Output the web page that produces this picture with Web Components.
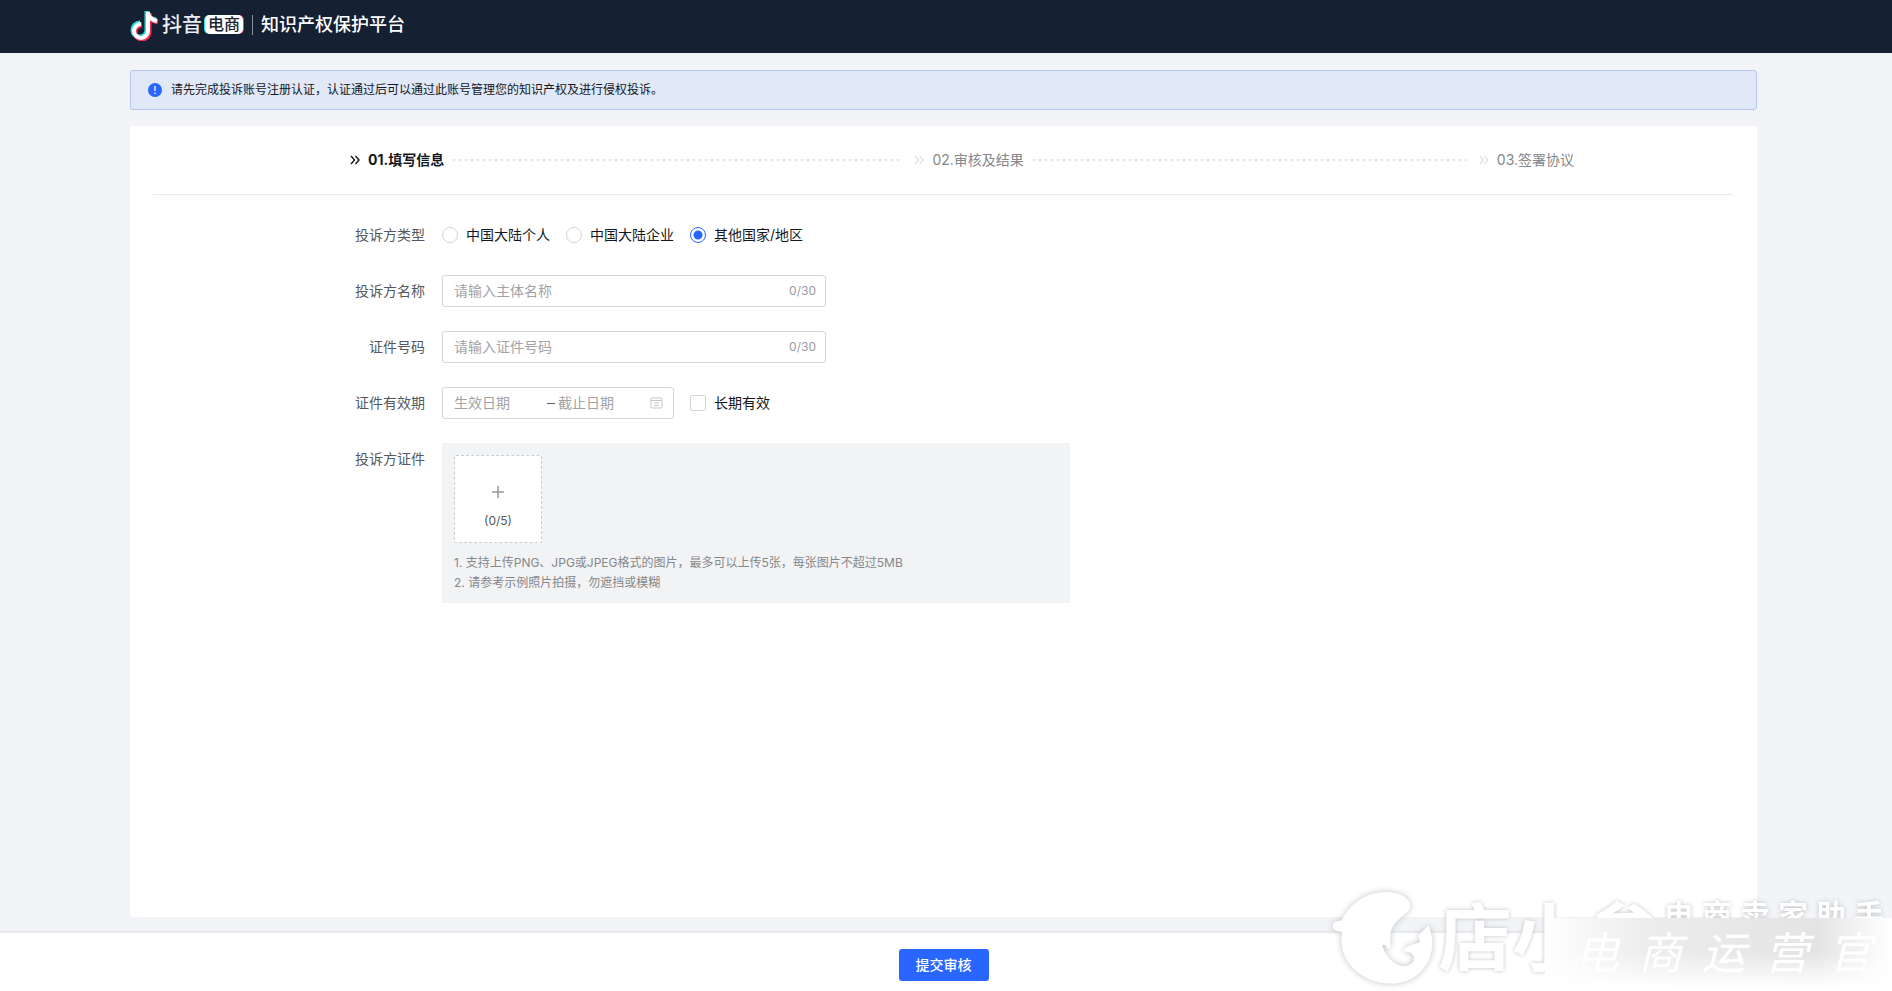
<!DOCTYPE html>
<html lang="zh-CN">
<head>
<meta charset="utf-8">
<title>知识产权保护平台</title>
<style>
  html, body { margin: 0; }
  body {
    background: #f2f4f7; color: #15171c;
    font: 14px/20px Inter, "Noto Sans CJK SC", sans-serif;
    --blue: #2966ff; --line: #d3d4d8; --muted: #85878a; --hint: #a1a3a6;
  }
</style>
</head>
<body>
<ip-page>
  <ip-header slot="header">知识产权保护平台</ip-header>
  <ip-notice slot="notice">请先完成投诉账号注册认证，认证通过后可以通过此账号管理您的知识产权及进行侵权投诉。</ip-notice>
  <ip-steps>
    <ip-step current>01.填写信息</ip-step>
    <ip-step>02.审核及结果</ip-step>
    <ip-step last>03.签署协议</ip-step>
  </ip-steps>
  <ip-form>
    <ip-type-field></ip-type-field>
    <ip-text-field label="投诉方名称" hint="请输入主体名称"></ip-text-field>
    <ip-text-field label="证件号码" hint="请输入证件号码"></ip-text-field>
    <ip-date-field></ip-date-field>
    <ip-upload-field></ip-upload-field>
  </ip-form>
  <ip-footer slot="footer">提交审核</ip-footer>
</ip-page>
<ip-watermark></ip-watermark>

<script>
const define = (name, html) => customElements.define(name, class extends HTMLElement {
  constructor() {
    super();
    const t = document.createElement('template');
    t.innerHTML = html;
    this.attachShadow({ mode: 'open' }).append(t.content.cloneNode(true));
  }
  connectedCallback() {
    const root = this.shadowRoot;
    const label = root.querySelector('[data-label]');
    if (label && this.hasAttribute('label')) label.textContent = this.getAttribute('label');
    const input = root.querySelector('[data-hint]');
    if (input && this.hasAttribute('hint')) input.placeholder = this.getAttribute('hint');
  }
});

const fieldCss = `
  *{box-sizing:border-box}
  :host{display:block}
  .row{display:flex;align-items:flex-start;margin:0;padding:0;border:0;min-width:0}
  .name{flex:none;width:73px;margin-right:17px;text-align:right;line-height:32px;color:#55585c}
  input,button{font:inherit;color:inherit}
  input::placeholder{color:var(--hint);opacity:1}
  .box{display:flex;align-items:center;height:32px;padding:0 9px 0 11px;border:1px solid var(--line);border-radius:3px;background:#fff}
  .box input{flex:1;min-width:0;padding:0 0 2px;border:0;outline:0;background:none;height:30px}
  .opt{display:flex;align-items:center;gap:8px;height:32px}
`;

define('ip-page', `<style>
  *{box-sizing:border-box}
  :host{display:flex;flex-direction:column;min-height:100vh}
  .main{flex:1;display:flex;flex-direction:column;gap:16px;padding:17px 135px 16px 130px}
  main{flex:1;background:#fff;border-radius:2px;padding:0 24px 24px 23px}
</style>
<slot name="header"></slot>
<div class="main"><slot name="notice"></slot><main><slot></slot></main></div>
<slot name="footer"></slot>`);

define('ip-header', `<style>
  :host{display:block;background:#152033;color:#fff}
  header{display:flex;align-items:center;height:53px;padding:0 130px 4px;box-sizing:border-box}
  svg{width:29px;height:32px;flex:none}
  .brand{font-size:20px;font-weight:500;line-height:28px;margin-left:3px;color:#eceef1}
  .tag{margin-left:3px;padding:0 3px;border-radius:5px;background:#fff;color:#20242c;font-size:16px;line-height:19px;font-weight:500;box-shadow:-1px 0 #25e5df,1px 0 #f23a60}
  .bar{width:1px;height:20px;background:#8b919c;margin:0 8px 0 9px}
  h1{margin:0;font-size:18px;line-height:26px;font-weight:500}
</style>
<header>
  <svg viewBox="0 0 29 32" aria-hidden="true">
    <g fill="none" stroke-width="5" transform="translate(1 1)">
      <path d="M17 2v19a7 7 0 1 1-7-7M17 3c1 5 4 7 9 8" stroke="#25e5df" transform="translate(-1 -1)"/>
      <path d="M17 2v19a7 7 0 1 1-7-7M17 3c1 5 4 7 9 8" stroke="#f72c55" transform="translate(1 1)"/>
      <path d="M17 2v19a7 7 0 1 1-7-7M17 3c1 5 4 7 9 8" stroke="#fff" stroke-width="4"/>
    </g>
  </svg>
  <span class="brand">抖音</span><span class="tag">电商</span><span class="bar"></span>
  <h1><slot></slot></h1>
</header>`);

define('ip-notice', `<style>
  :host{display:flex;align-items:center;gap:9px;box-sizing:border-box;height:40px;padding:0 17px;border:1px solid #b5c8f3;border-radius:3px;background:#e1e8f7;font-size:12px;line-height:20px;color:#15171c}
  svg{width:14px;height:14px;flex:none}
</style>
<svg viewBox="0 0 14 14" aria-hidden="true"><circle cx="7" cy="7" r="7" fill="#2966ff"/><path d="M7 3v5M7 9.500v1.500" stroke="#fff" stroke-width="1.300"/></svg>
<span><slot></slot></span>`);

define('ip-steps', `<style>
  :host{display:block;border-bottom:1px solid #e8e9eb}
  .list{display:flex;align-items:center;height:68px;width:78%;padding-left:197px;box-sizing:content-box;max-width:1224px}
</style><div class="list"><slot></slot></div>`);

define('ip-step', `<style>
  :host{display:flex;align-items:center;flex:1 1 0;color:#85878a;--chev:#e2e3e5}
  :host([last]){flex:none}
  :host([last]) i{display:none}
  :host([current]){color:#15171c;font-weight:700;--chev:#15171c}
  svg{flex:none;width:10px;height:10px;margin-right:8px}
  i{flex:1;height:3px;margin:0 12px 0 8px;background:radial-gradient(circle at 2px 1px,#e6e7e9 1px,transparent 2px) 0 0/6px 3px}
</style>
<svg viewBox="0 0 10 10" fill="none" stroke="var(--chev)" stroke-width="1.400" aria-hidden="true"><path d="M1 1l3.500 4L1 9M5.500 1L9 5 5.500 9"/></svg>
<span><slot></slot></span><i></i>`);

define('ip-form', `<style>
  :host{display:block}
  form{display:flex;flex-direction:column;gap:24px;padding:24px 0 0 199px}
</style><form><slot></slot></form>`);

define('ip-type-field', `<style>${fieldCss}
  .name{padding:0;float:left}
  .opts{display:flex;gap:16px}
  input{appearance:none;width:16px;height:16px;margin:0;border:1px solid var(--line);border-radius:50%;background:#fff}
  input:checked{border-color:var(--blue);background:radial-gradient(circle,var(--blue) 4px,#fff 5px)}
</style>
<fieldset class="row"><legend class="name">投诉方类型</legend>
  <div class="opts">
    <label class="opt"><input type="radio" name="kind"><span>中国大陆个人</span></label>
    <label class="opt"><input type="radio" name="kind"><span>中国大陆企业</span></label>
    <label class="opt"><input type="radio" name="kind" checked><span>其他国家/地区</span></label>
  </div>
</fieldset>`);

define('ip-text-field', `<style>${fieldCss}
  .box{width:384px}
  .count{color:#999b9e;font-size:12px}
</style>
<div class="row"><label class="name" for="f" data-label></label>
  <div class="box"><input id="f" type="text" maxlength="30" data-hint><span class="count">0/30</span></div>
</div>`);

define('ip-date-field', `<style>${fieldCss}
  .box{width:232px;margin-right:16px;padding-right:10px}
  .box input{flex:none;width:93px}
  .box .end{flex:1;width:auto;margin-left:3px}
  .dash{width:8px;height:1px;background:#55585c}
  svg{width:13px;height:12px}
  .tick{appearance:none;width:16px;height:16px;margin:0;border:1px solid var(--line);border-radius:2px;background:#fff}
</style>
<div class="row"><label class="name" for="s">证件有效期</label>
  <div class="box"><input id="s" type="text" placeholder="生效日期"><span class="dash"></span><input class="end" type="text" placeholder="截止日期" aria-label="截止日期">
    <svg viewBox="0 0 13 12" fill="none" stroke="#c4c5c9" aria-hidden="true"><rect x="1" y="1" width="11" height="10" rx="1"/><path d="M1 3.500h11M4 6h5M4 8.500h5"/></svg>
  </div>
  <label class="opt"><input class="tick" type="checkbox"><span>长期有效</span></label>
</div>`);

define('ip-upload-field', `<style>${fieldCss}
  .panel{width:628px;padding:12px 12px 10px;background:#f2f3f5;border-radius:2px}
  button{display:flex;flex-direction:column;align-items:center;justify-content:center;gap:12px;width:88px;height:88px;padding:17px 0 0;border:1px dashed #cbccd0;border-radius:2px;background:#fff;font-size:12px;line-height:20px;color:#55585c}
  svg{width:14px;height:14px}
  ol{margin:10px 0 0;padding:0;list-style:none;font-size:12px;line-height:20px;color:#85878a}
</style>
<div class="row"><label class="name" for="u">投诉方证件</label>
  <div class="panel">
    <button id="u" type="button"><svg viewBox="0 0 14 14" stroke="#96989b" stroke-width="1.500" aria-hidden="true"><path d="M7 1v12M1 7h12"/></svg><span>(0/5)</span></button>
    <ol><li>1. 支持上传PNG、JPG或JPEG格式的图片，最多可以上传5张，每张图片不超过5MB</li><li>2. 请参考示例照片拍摄，勿遮挡或模糊</li></ol>
  </div>
</div>`);

define('ip-footer', `<style>
  :host{display:block;background:#fff;box-shadow:0 -2px 2px #e6e8eb}
  footer{display:flex;justify-content:center;padding:16px 5px 10px 0}
  button{width:90px;height:32px;padding:0;border:0;border-radius:3px;background:var(--blue);color:#fff;font:inherit;font-weight:500}
</style><footer><button type="button"><slot></slot></button></footer>`);

/* Brand watermark floating over the lower right corner. */
define('ip-watermark', `<style>
  *{box-sizing:border-box}
  :host{position:fixed;right:0;bottom:0;width:572px;height:111px;overflow:hidden;pointer-events:none;color:#fff}
  svg{position:absolute;left:0;top:0;width:240px;height:111px;filter:drop-shadow(0 0 3px #bfc2c6)}
  .name,.sub{position:absolute;font-weight:700;white-space:nowrap;filter:drop-shadow(0 0 2px #bfc2c6)}
  .name{left:118px;top:20px;font-size:74px;line-height:76px}
  .sub{left:344px;right:8px;top:20px;font-size:30px;line-height:30px;display:flex;justify-content:space-between}
  .plate{position:absolute;left:225px;right:0;top:38px;height:70px;padding:0 20px 0 30px;display:flex;justify-content:space-between;align-items:center;
    font-size:44px;line-height:44px;font-style:italic;font-weight:400;
    background:linear-gradient(#fff0 50%,#fff),linear-gradient(90deg,#fff 0%,#ededed 28%,#e8e8e8 55%,#e4e4e4 78%,#fff 100%)}
</style>
<svg viewBox="0 0 720 333" aria-hidden="true">
  <path fill="#fff" d="M38 137C42 122 55 125 65 121C92 65 145 34 205 36C246 39 276 57 270 83C264 105 215 120 212 162C209 189 216 202 204 208C198 195 190 190 187 199C198 226 214 249 241 257C270 264 289 243 279 225C272 211 253 218 251 212C254 194 302 191 300 183C294 169 293 163 303 158L326 136C340 178 342 205 325 242C296 303 236 317 184 308C119 298 68 246 65 192C63 176 66 164 65 155C55 155 38 151 38 137Z"/>
</svg>
<div class="name">店小参</div>
<div class="sub"><span>电</span><span>商</span><span>卖</span><span>家</span><span>助</span><span>手</span></div>
<div class="plate"><span>电</span><span>商</span><span>运</span><span>营</span><span>官</span></div>`);
</script>
</body>
</html>
